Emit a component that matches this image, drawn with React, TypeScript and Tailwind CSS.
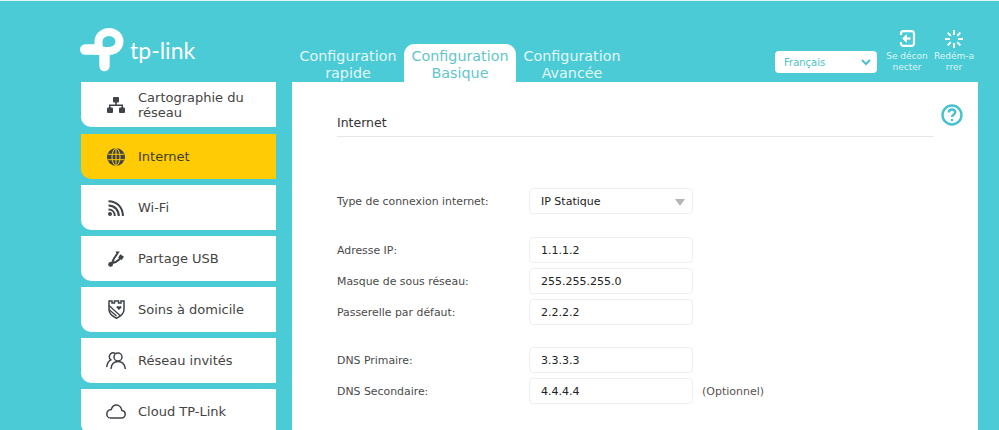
import React from "react";

const NetworkIcon = () => (
  <svg width="18" height="16" viewBox="0 0 18 16" fill="#3f4347">
    <rect x="6" y="0" width="6" height="5.500" rx="1" />
    <rect x="0" y="10.500" width="6" height="5.500" rx="1" />
    <rect x="12" y="10.500" width="6" height="5.500" rx="1" />
    <path d="M8.200 5h1.600v2.500H16V11h-1.600V9.100H3.600V11H2V7.500h6.200z" />
  </svg>
);
const GlobeIcon = () => (
  <svg width="18" height="18" viewBox="0 0 18 18" fill="none">
    <circle cx="9" cy="9" r="9" fill="#3f4347" />
    <g stroke="#ffcb05" strokeWidth="1">
      <ellipse cx="9" cy="9" rx="4" ry="8.500" />
      <path d="M9 .5v17M.8 6.300h16.400M.8 11.700h16.400" />
    </g>
  </svg>
);
const WifiIcon = () => (
  <svg width="16" height="16" viewBox="0 0 16 16" fill="none" stroke="#3f4347" strokeWidth="2">
    <path d="M.5 1.200C9 1.200 14.900 7.500 14.900 16" />
    <path d="M.5 5.500C6.500 5.500 10.800 10 10.800 16" />
    <path d="M.5 9.600C4.300 9.600 6.800 12.300 6.800 16" />
    <circle cx="2" cy="14" r="2" fill="#3f4347" stroke="none" />
  </svg>
);
const UsbIcon = () => (
  <svg width="16" height="16" viewBox="0 0 16 16" fill="none" stroke="#3f4347" strokeWidth="2">
    <circle cx="2.600" cy="13.400" r="2.400" fill="#3f4347" stroke="none" />
    <path d="M3 13C5 11 5 9 6 7.500L9 3" />
    <path d="M4.500 12C7 11.500 9 10.500 10.500 9L12.500 7.200" />
    <path d="M7.500 .5h4.300L9.200 4.300z" fill="#3f4347" stroke="none" />
    <path d="M12.300 3.300 16 5.700 13.600 9 10.200 6.400z" fill="#3f4347" stroke="none" />
  </svg>
);
const ShieldIcon = () => (
  <svg width="17" height="19" viewBox="0 0 17 19" fill="none" stroke="#3f4347" strokeWidth="1.500">
    <path d="M1 1h3v2h2.500V1h4v2H13V1h3v8.500c0 4-3.500 6.800-7.500 8.700C4.500 16.300 1 13.500 1 9.500z" />
    <path d="M1 5.500 12.500 16M1 9.500 8.500 16" strokeWidth="1.300" />
    <path d="M11 10 8.700 7.700c-.9-1.300 1.300-2.400 2.300-1 1-1.400 3.200-.3 2.300 1z" fill="#3f4347" stroke="none" />
  </svg>
);
const GuestIcon = () => (
  <svg width="20" height="17" viewBox="0 0 20 17" fill="none" stroke="#3f4347" strokeWidth="1.500" strokeLinecap="round">
    <circle cx="12" cy="5" r="4" />
    <path d="M5 16.500c.5-4.300 3-7 7-7s6.500 2.700 7.300 7" />
    <path d="M9 1.300C8.400.9 7.800.8 7.200.8 5 .8 3.300 2.500 3.300 4.800c0 1.300.6 2.400 1.500 3.100C2.700 9 1.200 11.500.8 14.500" />
  </svg>
);
const CloudIcon = () => (
  <svg width="20" height="15" viewBox="0 0 20 15" fill="none" stroke="#3f4347" strokeWidth="1.500">
    <path d="M4.500 14h11c2 0 3.700-1.600 3.700-3.700 0-2-1.500-3.500-3.300-3.700C15.400 3.500 13 1 10.300 1 8 1 6.100 2.700 5.300 5.400 2.700 5.400.8 7.500.8 9.900c0 2.400 1.700 4.100 3.700 4.100z" />
  </svg>
);

const items = [
  { label: "Cartographie du réseau", icon: <NetworkIcon /> },
  { label: "Internet", icon: <GlobeIcon />, active: true },
  { label: "Wi-Fi", icon: <WifiIcon /> },
  { label: "Partage USB", icon: <UsbIcon /> },
  { label: "Soins à domicile", icon: <ShieldIcon /> },
  { label: "Réseau invités", icon: <GuestIcon /> },
  { label: "Cloud TP-Link", icon: <CloudIcon /> },
];

const Field = ({ label, value, suffix, mt }: { label: string; value: string; suffix?: string; mt?: string }) => (
  <div className={`flex items-center h-[26px] ${mt ?? ""}`}>
    <div className="w-[192px] pt-[2px] text-[10.9px] text-[#4a4a4a]">{label}</div>
    <div className="w-[164px] h-[26px] rounded-[4px] border border-[#efefef] bg-white pl-[11px] pt-[2px] flex items-center text-[11px] text-[#222]">
      {value}
    </div>
    {suffix && <div className="ml-[9px] pt-[2px] text-[11px] text-[#555]">{suffix}</div>}
  </div>
);

export default function App() {
  return (
    <div className="w-[999px] h-[430px] overflow-hidden bg-[#4acbd6] border-t border-t-[#e4f6f8] pl-[81px] font-['DejaVu_Sans',Verdana,sans-serif]">
      <div className="flex h-[81px]">
        <div className="w-[211px] pt-[27px] -ml-px shrink-0">
          <div className="flex items-start">
            <svg width="45" height="44" viewBox="0 0 45 44" fill="none" stroke="#fff">
              <path d="M5.200 21.500H19" strokeWidth="10.400" strokeLinecap="round" />
              <path d="M24.500 24V38" strokeWidth="10.400" strokeLinecap="round" />
              <path d="M18.500 27V13.500A10.500 9.500 0 1 1 29 23H27" strokeWidth="8" />
            </svg>
            <span className="ml-[5px] mt-[9px] text-[23px] leading-[26px] text-white font-['Lato',sans-serif]">tp-link</span>
          </div>
        </div>
        <div className="flex w-[336px] shrink-0 pt-[43px] items-end text-[14.3px] leading-[17px] text-center ml-px">
          <div className="w-[112px] h-[38px] text-[#e3f7f9] pt-[4px]">Configuration<br />rapide</div>
          <div className="w-[112px] h-[38px] pt-[4px] bg-white text-[#62c5c9] rounded-t-[10px]">Configuration<br />Basique</div>
          <div className="w-[112px] h-[38px] pt-[4px] text-[#e3f7f9]">Configuration<br />Avancée</div>
        </div>
        <div className="flex ml-[147px] items-start pt-[29px] text-[9px] leading-[11px] text-center text-[#dff5f7]">
          <div className="mt-[21px] w-[102px] h-[22px] bg-white rounded-[4px] flex items-center justify-between pl-[9px] pr-[5px] text-[10px] text-[#4cc2cb] shrink-0">
            <span>Français</span>
            <svg width="12" height="8" viewBox="0 0 12 8" fill="none" stroke="#4cc2cb" strokeWidth="2">
              <path d="M2 2l4 4 4-4" />
            </svg>
          </div>
          <div className="ml-[8px] w-[44px] flex flex-col items-center shrink-0">
            <svg width="17" height="17" viewBox="0 0 17 17" fill="none" stroke="#fff" strokeWidth="2.200">
              <path d="M2 5V3.500A2.400 2.400 0 0 1 4.400 1.100h8.200A2.400 2.400 0 0 1 15 3.500v10a2.400 2.400 0 0 1-2.400 2.400H4.400A2.400 2.400 0 0 1 2 13.500V12" />
              <path d="M11.500 8.500H7" />
              <path d="M7.500 4.800 3.800 8.500l3.700 3.700z" fill="#fff" strokeWidth="1" />
            </svg>
            <div className="mt-[4px]">Se décon<br />necter</div>
          </div>
          <div className="ml-[3px] w-[44px] flex flex-col items-center shrink-0">
            <svg width="18" height="18" viewBox="0 0 18 18" fill="none" stroke="#fff" strokeWidth="1.900">
              <path d="M9 0v5M9 13v5M0 9h5M13 9h5M2.600 2.600l3.200 3.200M12.200 12.200l3.200 3.200M2.600 15.400l3.200-3.200M12.200 5.800l3.200-3.200" />
            </svg>
            <div className="mt-[3px]">Redém-a<br />rrer</div>
          </div>
        </div>
      </div>
      <div className="flex">
        <div className="w-[195px] flex flex-col gap-[6px] shrink-0">
          {items.map((it, i) => (
            <div
              key={it.label}
              className={`h-[45px] rounded-bl-[10px] flex items-center text-[13px] leading-[15px] ${i === 0 ? "mb-px" : ""} ${it.active ? "bg-[#ffcb05] text-[#413f2a]" : "bg-white text-[#444]"}`}
            >
              <div className="w-[57px] pl-[13px] flex justify-center shrink-0">{it.icon}</div>
              <div className="w-[125px]">{it.label}</div>
            </div>
          ))}
        </div>
        <div className="ml-[16px] w-[686px] h-[348px] bg-white pl-[45px] pr-[45px] relative">
          <div className="h-[55px] pt-[32px] border-b border-b-[#e6e6e6] text-[12.500px] leading-[18px] text-[#333]">Internet</div>
          <svg className="absolute right-[15px] top-[22px]" width="22" height="22" viewBox="0 0 22 22" fill="none" stroke="#45c2cc" strokeWidth="2.400">
            <circle cx="11" cy="11" r="9.500" />
            <path d="M7.800 8.500c0-1.900 1.400-3 3.200-3s3.200 1.100 3.200 2.800c0 2.400-3.200 2.500-3.200 4.700" />
            <circle cx="11" cy="16" r="1.300" fill="#45c2cc" stroke="none" />
          </svg>
          <div className="mt-[51px] flex flex-col gap-[5px]">
            <div className="flex items-center h-[26px]">
              <div className="w-[192px] pt-[2px] text-[10.9px] text-[#4a4a4a]">Type de connexion internet:</div>
              <div className="w-[164px] h-[26px] rounded-[4px] border border-[#efefef] bg-white pl-[11px] pr-[7px] pt-[2px] flex items-center justify-between text-[11px] text-[#222]">
                <span>IP Statique</span>
                <svg width="10" height="7" viewBox="0 0 10 7"><path d="M0 0h10L5 7z" fill="#b5b5b5" /></svg>
              </div>
            </div>
            <Field label="Adresse IP:" value="1.1.1.2" mt="mt-[18px]" />
            <Field label="Masque de sous réseau:" value="255.255.255.0" />
            <Field label="Passerelle par défaut:" value="2.2.2.2" />
            <Field label="DNS Primaire:" value="3.3.3.3" mt="mt-[17px]" />
            <Field label="DNS Secondaire:" value="4.4.4.4" suffix="(Optionnel)" />
          </div>
        </div>
      </div>
    </div>
  );
}
